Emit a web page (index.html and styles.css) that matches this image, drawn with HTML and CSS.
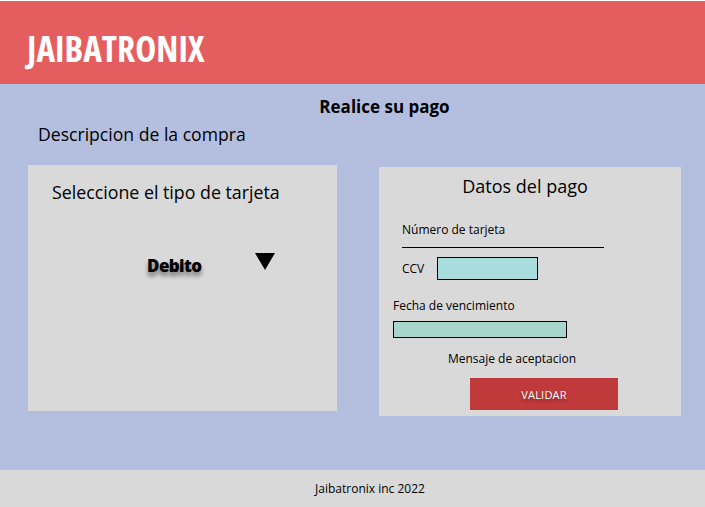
FILE: index.html
```html
<!DOCTYPE html>
<html lang="es">
<head>
<meta charset="utf-8">
<title>Jaibatronix</title>
<link rel="stylesheet" href="styles.css">
</head>
<body>
<header class="topbar">
  <h1 class="brand">JAIBATRONIX</h1>
</header>
<main class="content">
  <h2 class="page-title">Realice su pago</h2>
  <p class="desc">Descripcion de la compra</p>
  <div class="cards">
    <section class="card card-type">
      <h3 class="card-type-title">Seleccione el tipo de tarjeta</h3>
      <div class="select">
        <span class="select-value">Debito</span>
        <svg class="select-arrow" width="20" height="17" viewBox="0 0 20 17"><polygon points="0,0 20,0 10,17" fill="#000"/></svg>
      </div>
    </section>
    <section class="card card-pay">
      <h3 class="pay-title">Datos del pago</h3>
      <div class="field-number">Número de tarjeta</div>
      <div class="field-ccv">
        <span>CCV</span>
        <span class="input input-ccv"></span>
      </div>
      <div class="field-date-label">Fecha de vencimiento</div>
      <span class="input input-date"></span>
      <div class="msg">Mensaje de aceptacion</div>
      <button class="btn">VALIDAR</button>
    </section>
  </div>
</main>
<footer class="footer">Jaibatronix inc 2022</footer>
</body>
</html>
```
FILE: styles.css
```css
* { box-sizing: border-box; }
html, body { margin: 0; padding: 0; background: #ffffff; }
body {
  font-family: "Open Sans", "Noto Sans", sans-serif;
  color: #000;
  width: 705px;
  height: 507px;
  overflow: hidden;
  padding-top: 1px;
}
.topbar {
  height: 83px;
  background: #e55e5f;
  display: flex;
  align-items: center;
  padding-left: 27px;
  padding-top: 11px;
}
.brand {
  margin: 0;
  color: #fff;
  font-size: 35.5px;
  font-weight: 700;
  font-stretch: 78%;
  letter-spacing: 0;
}
.content {
  background: #b4bfe0;
  height: 386px;
  padding-top: 11px;
}
.page-title {
  margin: 0;
  font-size: 17px;
  font-weight: 700;
  text-align: center;
  padding-left: 64px;
  line-height: 24px;
}
.desc {
  margin: 3px 0 0 38px;
  font-size: 17.6px;
  line-height: 24px;
}
.cards {
  display: flex;
  align-items: flex-start;
  gap: 42px;
  margin-top: 19px;
  padding-left: 28px;
}
.card {
  background: #d9d9d9;
}
.card-type {
  width: 309px;
  height: 246px;
  padding: 15px 0 0 24px;
}
.card-type-title {
  margin: 0;
  font-size: 17.8px;
  font-weight: 400;
  line-height: 24px;
}
.select {
  display: flex;
  align-items: center;
  margin: 50px 0 0 95px;
}
.select-value {
  font-weight: 800;
  font-size: 17px;
  font-stretch: 90%;
  letter-spacing: -0.6px;
  text-shadow: 0 4px 4px rgba(0,0,0,0.45);
}
.select-arrow { margin-left: 53px; margin-top: -8px; }
.card-pay {
  width: 302px;
  height: 249px;
  margin-top: 2px;
  display: flex;
  flex-direction: column;
  padding: 7px 0 0 0;
}
.pay-title {
  margin: 0;
  font-size: 18px;
  font-weight: 400;
  text-align: center;
  line-height: 24px;
  padding-right: 10px;
}
.field-number {
  margin: 24px 0 0 23px;
  width: 202px;
  font-size: 12px;
  line-height: 16px;
  padding-bottom: 9px;
  border-bottom: 1px solid #000;
}
.field-ccv {
  display: flex;
  align-items: center;
  margin: 9px 0 0 23px;
  font-size: 12px;
  gap: 13px;
}
.input {
  display: block;
  border: 1px solid #000;
}
.input-ccv {
  width: 101px;
  height: 23px;
  background: #a9dcdc;
}
.field-date-label {
  margin: 18px 0 0 14px;
  font-size: 12px;
  line-height: 16px;
}
.input-date {
  margin: 7px 0 0 14px;
  width: 174px;
  height: 17px;
  background: #a6d6cc;
}
.msg {
  margin: 13px 0 0 0;
  padding-right: 36px;
  text-align: center;
  font-size: 12px;
  line-height: 16px;
}
.btn {
  margin: 11px 0 0 91px;
  width: 148px;
  height: 32px;
  border: 0;
  background: #c0393b;
  color: #fff;
  font-family: inherit;
  font-size: 11px;
  letter-spacing: 0.2px;
  text-shadow: 0 2px 3px rgba(0,0,0,0.35);
  padding: 0;
}
.footer {
  height: 37px;
  background: #d9d9d9;
  display: flex;
  align-items: center;
  justify-content: center;
  font-size: 12px;
  padding-left: 35px;
}
```
